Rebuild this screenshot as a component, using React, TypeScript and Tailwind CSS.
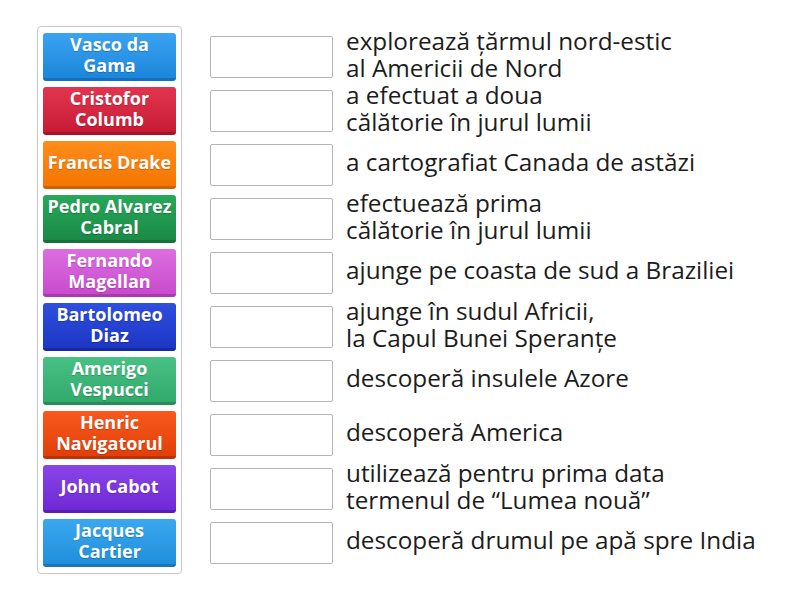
const items: { name: string[]; tile: string; text: string[] }[] = [
  { name: ["Vasco da", "Gama"], tile: "bg-gradient-to-b from-[#3aa3f2] to-[#1a86da] border-b-[#1570ba]", text: ["explorează țărmul nord-estic", "al Americii de Nord"] },
  { name: ["Cristofor", "Columb"], tile: "bg-gradient-to-b from-[#e2344f] to-[#c81a35] border-b-[#a3142a]", text: ["a efectuat a doua", "călătorie în jurul lumii"] },
  { name: ["Francis Drake"], tile: "bg-gradient-to-b from-[#ff8c1a] to-[#f57600] border-b-[#cf6200]", text: ["a cartografiat Canada de astăzi"] },
  { name: ["Pedro Alvarez", "Cabral"], tile: "bg-gradient-to-b from-[#27a85a] to-[#1b8a47] border-b-[#15703a]", text: ["efectuează prima", "călătorie în jurul lumii"] },
  { name: ["Fernando", "Magellan"], tile: "bg-gradient-to-b from-[#dc6ee0] to-[#c94acd] border-b-[#a83aac]", text: ["ajunge pe coasta de sud a Braziliei"] },
  { name: ["Bartolomeo", "Diaz"], tile: "bg-gradient-to-b from-[#2f4fe0] to-[#1d36c4] border-b-[#172ba0]", text: ["ajunge în sudul Africii,", "la Capul Bunei Speranțe"] },
  { name: ["Amerigo", "Vespucci"], tile: "bg-gradient-to-b from-[#48c184] to-[#32aa6c] border-b-[#288c59]", text: ["descoperă insulele Azore"] },
  { name: ["Henric", "Navigatorul"], tile: "bg-gradient-to-b from-[#f8581c] to-[#e23f08] border-b-[#bb3305]", text: ["descoperă America"] },
  { name: ["John Cabot"], tile: "bg-gradient-to-b from-[#8a44e8] to-[#7028d6] border-b-[#5b1fb0]", text: ["utilizează pentru prima data", "termenul de “Lumea nouă”"] },
  { name: ["Jacques", "Cartier"], tile: "bg-gradient-to-b from-[#3aa8ef] to-[#1f8fdc] border-b-[#1975b6]", text: ["descoperă drumul pe apă spre India"] },
];

export default function App(): JSX.Element {
  return (
    <div className="w-[800px] h-[600px] bg-white flex pt-[26px] pl-[37px] font-['Open_Sans',sans-serif]">
      <div className="self-start border border-[#c8c8c8] rounded-[4px] px-[5px] py-[6px] flex flex-col gap-[6px] shadow-[0_0_2px_rgba(0,0,0,0.08)]">
        {items.map((it, i) => (
          <div
            key={i}
            className={`w-[133px] h-[48px] rounded-[3px] border-b-[3px] pb-[2px] flex flex-col items-center justify-center text-white font-bold text-[18px] leading-[21px] text-center [text-shadow:0_1px_1px_rgba(0,0,0,0.2)] ${it.tile}`}
          >
            {it.name.map((n, j) => (
              <span key={j} className="whitespace-nowrap">{n}</span>
            ))}
          </div>
        ))}
      </div>
      <div className="ml-[28px] mt-[7px] flex flex-col gap-[6px]">
        {items.map((it, i) => (
          <div key={i} className="h-[48px] flex items-center">
            <div className="w-[123px] h-[42px] border border-[#b4b4b4] rounded-[2px] bg-white shrink-0" />
            <div className="ml-[13px] pb-[7px] text-[24.3px] leading-[27px] text-[#1c1c1c] whitespace-nowrap">
              {it.text.map((t, j) => (
                <div key={j}>{t}</div>
              ))}
            </div>
          </div>
        ))}
      </div>
    </div>
  );
}
